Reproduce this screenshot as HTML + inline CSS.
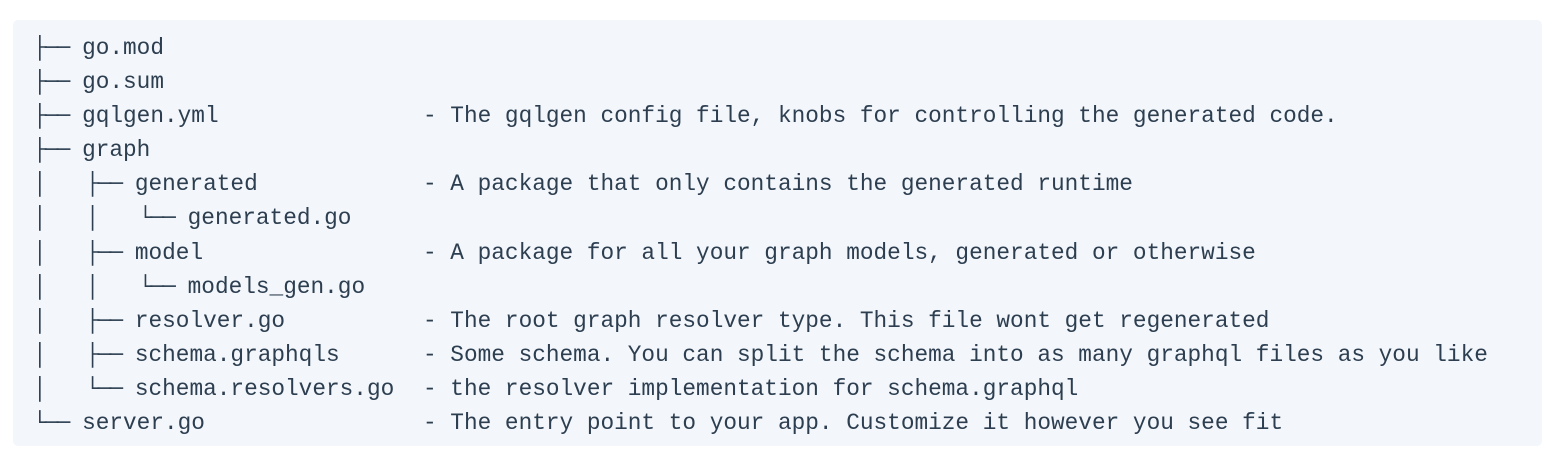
<!DOCTYPE html>
<html><head><meta charset="utf-8"><style>
html,body{margin:0;padding:0;background:#fff;width:1542px;height:460px;overflow:hidden}
.box{position:absolute;left:13px;top:20px;width:1529px;height:426px;background:#f3f6fa;border-radius:5px}
.c{position:absolute;left:33px;top:31px;font-family:"Liberation Mono","DejaVu Sans Mono",monospace;font-size:22.75px;line-height:34.1px;color:#2c3e50}
.l{position:relative;height:34.1px;white-space:pre}
.t{letter-spacing:-1.85px}
.d{position:absolute;left:390px;top:0}
</style></head><body>
<div class="box"></div>
<div class="c"><div class="l"><span class="t">├──</span> go.mod</div><div class="l"><span class="t">├──</span> go.sum</div><div class="l"><span class="t">├──</span> gqlgen.yml<span class="d">- The gqlgen config file, knobs for controlling the generated code.</span></div><div class="l"><span class="t">├──</span> graph</div><div class="l"><span class="t">│</span>   <span class="t">├──</span> generated<span class="d">- A package that only contains the generated runtime</span></div><div class="l"><span class="t">│</span>   <span class="t">│</span>   <span class="t">└──</span> generated.go</div><div class="l"><span class="t">│</span>   <span class="t">├──</span> model<span class="d">- A package for all your graph models, generated or otherwise</span></div><div class="l"><span class="t">│</span>   <span class="t">│</span>   <span class="t">└──</span> models_gen.go</div><div class="l"><span class="t">│</span>   <span class="t">├──</span> resolver.go<span class="d">- The root graph resolver type. This file wont get regenerated</span></div><div class="l"><span class="t">│</span>   <span class="t">├──</span> schema.graphqls<span class="d">- Some schema. You can split the schema into as many graphql files as you like</span></div><div class="l"><span class="t">│</span>   <span class="t">└──</span> schema.resolvers.go<span class="d">- the resolver implementation for schema.graphql</span></div><div class="l"><span class="t">└──</span> server.go<span class="d">- The entry point to your app. Customize it however you see fit</span></div></div>
</body></html>
